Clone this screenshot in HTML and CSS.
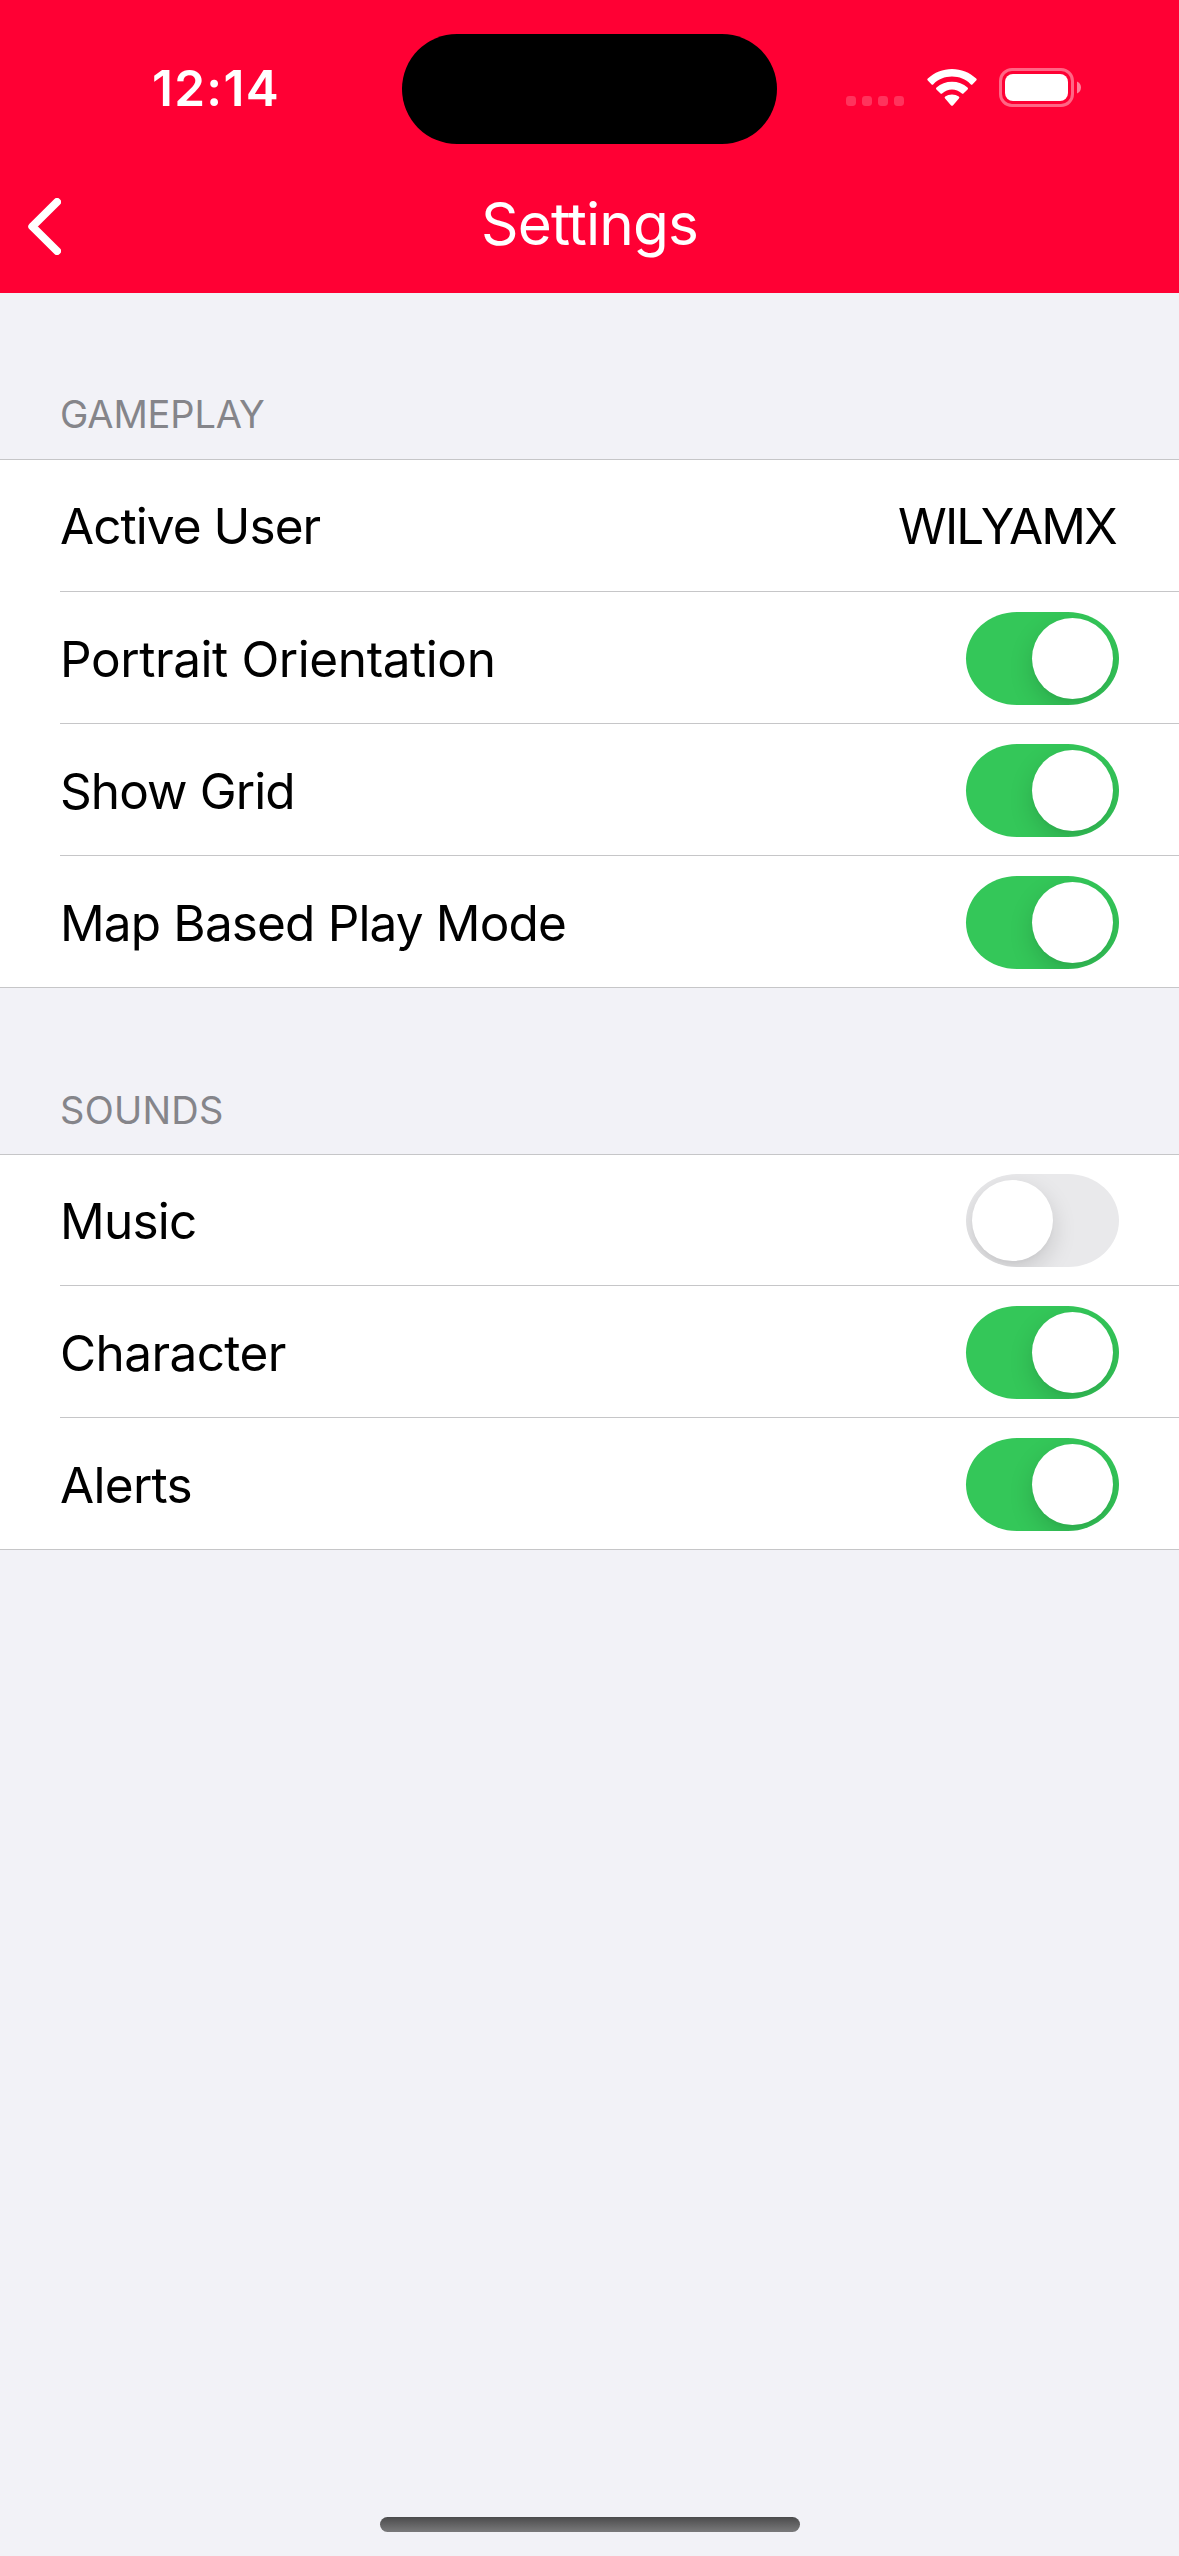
FILE: index.html
```html
<!DOCTYPE html>
<html lang="en">
<head>
<meta charset="utf-8">
<title>Settings</title>
<link rel="stylesheet" href="styles.css">
</head>
<body>
<div class="screen">
  <header class="header">
    <div class="status-bar">
      <div class="time">12:14</div>
      <div class="island"></div>
      <div class="indicators">
        <svg class="cellular" width="58" height="10" viewBox="0 0 58 10" fill="#fff" fill-opacity=".2">
          <rect x="0" width="10" height="10" rx="3.4"/><rect x="16" width="10" height="10" rx="3.4"/><rect x="32" width="10" height="10" rx="3.4"/><rect x="48" width="10" height="10" rx="3.4"/>
        </svg>
        <svg class="wifi" width="50" height="38" viewBox="0 0 50 38" fill="#fff">
          <path d="M25 7.6C32.2 7.6 38.7 10.3 43.6 15.2Q44.6 16.2 45.6 15.2L49.2 11.6Q50.2 10.6 49.2 9.6C42.7 3.4 34.1 0 25 0S7.3 3.4.8 9.600Q-.2 10.600.8 11.600L4.400 15.200Q5.400 16.200 6.400 15.200C11.300 10.300 17.800 7.600 25 7.600Z"/>
          <path d="M25 20.500C28.600 20.500 32 21.900 34.600 24.200Q35.700 25.200 36.700 24.200L40.600 20.400Q41.600 19.400 40.500 18.400C36.300 14.700 30.900 12.700 25 12.700S13.700 14.700 9.500 18.400Q8.400 19.400 9.400 20.400L13.300 24.200Q14.300 25.200 15.400 24.200C18 21.900 21.400 20.500 25 20.500Z"/>
          <path d="M31.900 29.400Q33 28.400 31.800 27.500C29.800 26.200 27.500 25.500 25 25.500S20.200 26.200 18.200 27.500Q17 28.400 18.100 29.400L24.100 36.400Q25 37.300 25.900 36.400Z"/>
        </svg>
        <svg class="battery" width="83" height="39" viewBox="0 0 83 39">
          <rect x="1.500" y="1.500" width="72" height="36" rx="11.500" fill="none" stroke="#fff" stroke-opacity=".4" stroke-width="3"/>
          <rect x="6" y="6" width="63" height="27" rx="8" fill="#fff"/>
          <path d="M78 13.500C80.400 14.500 82 16.800 82 19.500S80.400 24.500 78 25.500Z" fill="#fff" fill-opacity=".5"/>
        </svg>
      </div>
    </div>
    <nav class="nav-bar">
      <svg class="back" width="33" height="57" viewBox="0 0 33 57" fill="none" stroke="#fff" stroke-width="8" stroke-linecap="round" stroke-linejoin="round">
        <path d="M29 4L4.300 28.500L29 53"/>
      </svg>
      <h1 class="title">Settings</h1>
    </nav>
  </header>

  <main class="content">
    <section class="group gameplay">
      <h2 class="group-title">GAMEPLAY</h2>
      <ul class="rows">
        <li class="row active-user"><span class="label">Active User</span><span class="value">WILYAMX</span></li>
        <li class="row portrait"><span class="label">Portrait Orientation</span><span class="switch on"><span class="knob"></span></span></li>
        <li class="row show-grid"><span class="label">Show Grid</span><span class="switch on"><span class="knob"></span></span></li>
        <li class="row map-mode"><span class="label">Map Based Play Mode</span><span class="switch on"><span class="knob"></span></span></li>
      </ul>
    </section>
    <section class="group sounds">
      <h2 class="group-title">SOUNDS</h2>
      <ul class="rows">
        <li class="row music"><span class="label">Music</span><span class="switch"><span class="knob"></span></span></li>
        <li class="row character"><span class="label">Character</span><span class="switch on"><span class="knob"></span></span></li>
        <li class="row alerts"><span class="label">Alerts</span><span class="switch on"><span class="knob"></span></span></li>
      </ul>
    </section>
  </main>
  <footer class="footer"><div class="home-indicator"></div></footer>
</div>
</body>
</html>
```
FILE: styles.css
```css
* { box-sizing: border-box; }

body {
  margin: 0;
  font-family: Inter, "Liberation Sans", sans-serif;
  color: #000;
}

.screen {
  display: flex;
  flex-direction: column;
  width: 1179px;
  height: 2556px;
  background: #f2f2f7;
}

/* Header */
.header {
  height: 293px;
  padding-top: 34px;
  background: #ff0034;
  color: #fff;
}

.status-bar {
  display: grid;
  grid-template-columns: 402px 375px 402px;
  align-items: center;
  height: 110px;
}

.time {
  padding-left: 152px;
  padding-bottom: 2px;
  font-size: 49.5px;
  font-weight: 600;
  line-height: 60px;
  letter-spacing: 1.3px;
}

.island {
  height: 110px;
  border-radius: 55px;
  background: #000;
}

.indicators {
  display: flex;
  align-items: flex-end;
  height: 39px;
  margin-bottom: 3px;
  padding-left: 69px;
}

.cellular { margin-bottom: 1px; }
.wifi { margin: 0 22.5px; }

.nav-bar {
  display: grid;
  grid-template-columns: 120px 1fr 120px;
  align-items: center;
  height: 132px;
  margin-top: 17px;
}

.back { margin: 0 0 1px 28px; }

.title {
  margin: 0;
  padding-bottom: 6px;
  font-size: 58.5px;
  font-weight: 400;
  line-height: 72px;
  letter-spacing: -0.87px;
  text-align: center;
}

/* Grouped list */
.group-title {
  height: 166px;
  margin: 0;
  padding: 98px 60px 0;
  color: #85858a;
  font-size: 38px;
  font-weight: 400;
  line-height: 46px;
  letter-spacing: -0.15px;
}

.sounds .group-title {
  padding-top: 99px;
  letter-spacing: 0.25px;
}

.rows {
  margin: 0;
  padding: 0;
  list-style: none;
  background: #fff;
  border-top: 1px solid #c6c6c8;
  border-bottom: 1px solid #c6c6c8;
}

.row {
  display: flex;
  justify-content: space-between;
  align-items: flex-start;
  height: 132px;
  margin-left: 60px;
  padding: 20px 60px 0 0;
  border-bottom: 1px solid #c6c6c8;
}

.row:last-child {
  height: 131px;
  border-bottom: 0;
}

.label,
.value {
  padding-top: 17px;
  font-size: 49.5px;
  line-height: 60px;
  letter-spacing: -0.7px;
  white-space: nowrap;
}

.active-user { padding-top: 19px; }
.active-user .label { letter-spacing: -0.95px; }
.active-user .value { margin-right: 3px; letter-spacing: -1.85px; }
.portrait .label { letter-spacing: -0.42px; }
.show-grid .label { letter-spacing: -0.9px; }
.map-mode .label { letter-spacing: -0.85px; }
.music { height: 131px; padding-top: 19px; }
.music .label { letter-spacing: -0.8px; }
.character .label { letter-spacing: -0.6px; }

/* Switch */
.switch {
  display: flex;
  width: 153px;
  height: 93px;
  padding: 6px;
  overflow: hidden;
  border-radius: 51px / 46.5px;
  background: #e9e9eb;
}

.switch.on {
  justify-content: flex-end;
  background: #34c759;
}

.knob {
  width: 81px;
  height: 81px;
  border-radius: 50%;
  background: #fff;
  box-shadow: 0 9px 24px rgba(0, 0, 0, 0.15), 0 3px 3px rgba(0, 0, 0, 0.02);
}

/* Home indicator */
.footer {
  margin-top: auto;
  padding-bottom: 24px;
}

.home-indicator {
  width: 420px;
  height: 15px;
  margin-left: 380px;
  border-radius: 8px;
  background: linear-gradient(#4b4b4c, #7a7a7b);
}
```
